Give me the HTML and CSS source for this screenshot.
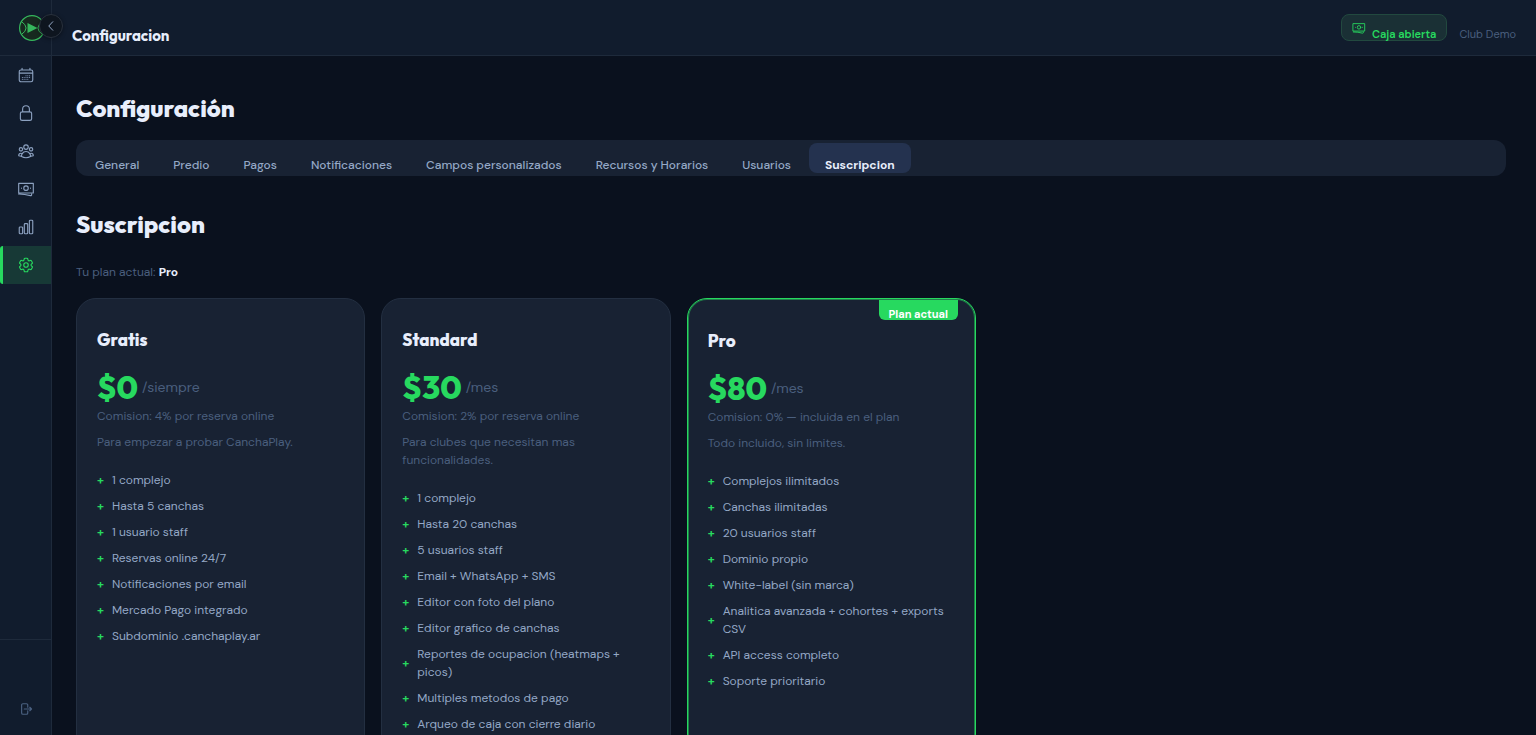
FILE: index.html
```html
<!DOCTYPE html>
<html lang="es">
<head>
<meta charset="utf-8">
<meta name="viewport" content="width=device-width, initial-scale=1">
<title>Configuracion</title>
<link rel="stylesheet" href="styles.css">
</head>
<body>
<svg class="sprite" aria-hidden="true">
  <symbol id="cash" viewBox="0 0 24 24"><path d="M2.250 18.750a60 60 0 0 1 15.800 2.100c.730.200 1.450-.340 1.450-1.100v-1M2.250 4.500h19.500v12.750H2.250zM15 10.900a3 3 0 1 1-6 0 3 3 0 0 1 6 0zM18 10.900h.010M6 10.900h.010"/></symbol>
</svg>
<div class="app">
  <aside class="sidebar">
    <div class="brand">
      <svg class="logo" viewBox="0 0 26 26" role="img" aria-label="CanchaPlay"><circle cx="13" cy="13" r="12.400" fill="#17291f" stroke="#36b85d" stroke-width="1.200"/><path d="M2.500 6.500Q12 13 2.500 19.500M23.500 6.500Q14 13 23.500 19.500" fill="none" stroke="#36b85d" stroke-width="1"/><path d="M8.500 8L18.500 13l-10 5z" fill="#36b85d" stroke="none"/></svg>
      <button class="collapse" aria-label="Contraer menu"><svg class="icon-xs" viewBox="0 0 24 24"><path d="M15.500 3.500L7.500 12l8 8.500"/></svg></button>
    </div>
    <nav class="nav" aria-label="Principal">
      <a href="#" aria-label="Reservas"><svg class="icon" viewBox="0 0 24 24"><path d="M6.750 3v2.250M17.250 3v2.250M3 18.750V7.500a2.250 2.250 0 0 1 2.250-2.250h13.500A2.250 2.250 0 0 1 21 7.500v11.250A2.250 2.250 0 0 1 18.750 21H5.250A2.250 2.250 0 0 1 3 18.750zM3 9.500h18M12 13h.01M12 15.300h.01M12 17.600h.01M9.500 15.300h.01M9.500 17.600h.01M7.200 15.300h.01M7.200 17.600h.01M14.400 13h.01M14.400 15.300h.01M14.400 17.600h.01M16.800 13h.01M16.800 15.300h.01"/></svg></a>
      <a href="#" aria-label="Bloqueos"><svg class="icon" viewBox="0 0 24 24"><path d="M16.500 10.500V6.750a4.500 4.500 0 1 0-9 0v3.750M6.750 21.750h10.500a2.250 2.250 0 0 0 2.250-2.250v-6.750a2.250 2.250 0 0 0-2.250-2.250H6.750a2.250 2.250 0 0 0-2.250 2.250v6.750a2.250 2.250 0 0 0 2.250 2.250z"/></svg></a>
      <a href="#" aria-label="Clientes"><svg class="icon" viewBox="0 0 24 24"><path d="M18 18.720a9.090 9.090 0 0 0 3.740-.480 3 3 0 0 0-4.680-2.720M18 18.720v.030c0 .220-.010.440-.040.660A11.940 11.940 0 0 1 12 21c-2.170 0-4.210-.580-5.960-1.580A6 6 0 0 1 6 18.720M18 18.720a5.970 5.970 0 0 0-.940-3.200 6 6 0 0 0-10.120 0A5.970 5.970 0 0 0 6 18.720a9.090 9.090 0 0 1-3.740-.480 3 3 0 0 1 4.680-2.720M15 6.750a3 3 0 1 1-6 0 3 3 0 0 1 6 0zM21 9.750a2.250 2.250 0 1 1-4.500 0 2.250 2.250 0 0 1 4.500 0zM7.500 9.750a2.250 2.250 0 1 1-4.500 0 2.250 2.250 0 0 1 4.500 0z"/></svg></a>
      <a href="#" aria-label="Caja"><svg class="icon"><use href="#cash"/></svg></a>
      <a href="#" aria-label="Reportes"><svg class="icon" viewBox="0 0 24 24"><path d="M3 13.125c0-.620.500-1.125 1.125-1.125h2.250c.620 0 1.125.500 1.125 1.125v6.750c0 .620-.500 1.125-1.125 1.125h-2.250A1.125 1.125 0 0 1 3 19.875zM9.750 8.625c0-.620.500-1.125 1.125-1.125h2.250c.620 0 1.125.500 1.125 1.125v11.250c0 .620-.500 1.125-1.125 1.125h-2.250a1.125 1.125 0 0 1-1.125-1.125zM16.500 4.125c0-.620.500-1.125 1.125-1.125h2.250C20.500 3 21 3.500 21 4.125v15.750c0 .620-.500 1.125-1.125 1.125h-2.250a1.125 1.125 0 0 1-1.125-1.125z"/></svg></a>
      <a href="#" class="active" aria-label="Configuracion" aria-current="page"><svg class="icon" viewBox="0 0 24 24"><path d="M9.594 3.940c.090-.542.560-.940 1.110-.940h2.593c.550 0 1.020.398 1.110.940l.213 1.281c.063.374.313.686.645.870.074.040.147.083.220.127.325.196.720.257 1.075.124l1.217-.456a1.125 1.125 0 0 1 1.370.490l1.296 2.247a1.125 1.125 0 0 1-.260 1.431l-1.003.827c-.293.241-.438.613-.430.992a7.723 7.723 0 0 1 0 .255c-.008.378.137.750.430.991l1.004.827c.424.350.534.955.260 1.430l-1.298 2.247a1.125 1.125 0 0 1-1.369.491l-1.217-.456c-.355-.133-.750-.072-1.076.124a6.470 6.470 0 0 1-.220.128c-.331.183-.581.495-.644.869l-.213 1.281c-.090.543-.560.940-1.110.940h-2.594c-.550 0-1.019-.398-1.110-.940l-.213-1.281c-.062-.374-.312-.686-.644-.870a6.520 6.520 0 0 1-.220-.127c-.325-.196-.720-.257-1.076-.124l-1.217.456a1.125 1.125 0 0 1-1.369-.490l-1.297-2.247a1.125 1.125 0 0 1 .260-1.431l1.004-.827c.292-.240.437-.613.430-.991a6.932 6.932 0 0 1 0-.255c.007-.380-.138-.751-.430-.992l-1.004-.827a1.125 1.125 0 0 1-.260-1.430l1.297-2.247a1.125 1.125 0 0 1 1.370-.491l1.216.456c.356.133.751.072 1.076-.124.072-.044.146-.086.220-.128.332-.183.582-.495.644-.869zM15 12a3 3 0 1 1-6 0 3 3 0 0 1 6 0z"/></svg></a>
    </nav>
    <div class="sidebar-foot">
      <button class="logout" aria-label="Cerrar sesion"><svg class="icon-sm" viewBox="0 0 24 24"><path d="M15 9V5.250A2.250 2.250 0 0 0 12.750 3h-6A2.250 2.250 0 0 0 4.500 5.250v13.500A2.250 2.250 0 0 0 6.750 21h6A2.250 2.250 0 0 0 15 18.750V15M18.500 9l3 3-3 3M21.500 12H9"/></svg></button>
    </div>
  </aside>
  <div class="workspace">
    <header class="topbar">
      <div class="page-name">Configuracion</div>
      <div class="status">
        <button class="cash-state"><svg class="icon-sm"><use href="#cash"/></svg><span>Caja abierta</span></button>
        <span class="club">Club Demo</span>
      </div>
    </header>
    <main class="content">
      <h1>Configuración</h1>
      <div class="tabs" role="tablist">
        <button role="tab">General</button>
        <button role="tab">Predio</button>
        <button role="tab">Pagos</button>
        <button role="tab">Notificaciones</button>
        <button role="tab">Campos personalizados</button>
        <button role="tab">Recursos y Horarios</button>
        <button role="tab">Usuarios</button>
        <button role="tab" aria-selected="true">Suscripcion</button>
      </div>
      <h2>Suscripcion</h2>
      <p class="current">Tu plan actual: <strong>Pro</strong></p>
      <div class="plans">
        <section class="plan">
          <h3>Gratis</h3>
          <div class="price"><strong>$0</strong><span>/siempre</span></div>
          <p class="fee">Comision: 4% por reserva online</p>
          <p class="about">Para empezar a probar CanchaPlay.</p>
          <ul>
            <li><span>1 complejo</span></li>
            <li><span>Hasta 5 canchas</span></li>
            <li><span>1 usuario staff</span></li>
            <li><span>Reservas online 24/7</span></li>
            <li><span>Notificaciones por email</span></li>
            <li><span>Mercado Pago integrado</span></li>
            <li><span>Subdominio .canchaplay.ar</span></li>
          </ul>
        </section>
        <section class="plan">
          <h3>Standard</h3>
          <div class="price"><strong>$30</strong><span>/mes</span></div>
          <p class="fee">Comision: 2% por reserva online</p>
          <p class="about">Para clubes que necesitan mas funcionalidades.</p>
          <ul>
            <li><span>1 complejo</span></li>
            <li><span>Hasta 20 canchas</span></li>
            <li><span>5 usuarios staff</span></li>
            <li><span>Email + WhatsApp + SMS</span></li>
            <li><span>Editor con foto del plano</span></li>
            <li><span>Editor grafico de canchas</span></li>
            <li><span>Reportes de ocupacion (heatmaps + picos)</span></li>
            <li><span>Multiples metodos de pago</span></li>
            <li><span>Arqueo de caja con cierre diario</span></li>
          </ul>
        </section>
        <section class="plan plan-current">
          <div class="badge">Plan actual</div>
          <h3>Pro</h3>
          <div class="price"><strong>$80</strong><span>/mes</span></div>
          <p class="fee">Comision: 0% — incluida en el plan</p>
          <p class="about">Todo incluido, sin limites.</p>
          <ul>
            <li><span>Complejos ilimitados</span></li>
            <li><span>Canchas ilimitadas</span></li>
            <li><span>20 usuarios staff</span></li>
            <li><span>Dominio propio</span></li>
            <li><span>White-label (sin marca)</span></li>
            <li><span>Analitica avanzada + cohortes + exports CSV</span></li>
            <li><span>API access completo</span></li>
            <li><span>Soporte prioritario</span></li>
          </ul>
        </section>
      </div>
    </main>
  </div>
</div>
</body>
</html>
```
FILE: styles.css
```css
:root {
  --bg: #0a111e;
  --panel: #111c2d;
  --card: #182233;
  --line: #1e2a3b;
  --text: #e8eefc;
  --soft: #94a8c6;
  --muted: #4a5f7e;
  --green: #27d95f;
  --display: "Outfit", "Lato", sans-serif;
}

* { box-sizing: border-box; }

body {
  margin: 0;
  background: var(--bg);
  color: var(--text);
  font: 12px/18px "DM Sans", "Inter", sans-serif;
}

h1, h2, h3, p, ul { margin: 0; padding: 0; }
button { border: 0; padding: 0; background: none; color: inherit; font: inherit; cursor: pointer; }

svg { display: block; flex: none; fill: none; stroke: currentColor; stroke-width: 1.5; stroke-linecap: round; stroke-linejoin: round; }
.sprite { position: absolute; width: 0; height: 0; }
.icon { width: 18px; height: 18px; }
.icon-sm { width: 14px; height: 14px; }
.icon-xs { width: 12px; height: 12px; stroke-width: 2; }

.app { display: flex; height: 100vh; }

.sidebar {
  display: flex;
  flex-direction: column;
  flex: none;
  width: 52px;
  background: var(--panel);
  border-right: 1px solid var(--line);
}
.brand {
  position: relative;
  display: flex;
  align-items: center;
  height: 56px;
  padding-left: 19px;
  border-bottom: 1px solid var(--line);
}
.logo { width: 26px; height: 26px; }
.collapse {
  position: absolute;
  top: 14px;
  right: -12px;
  display: grid;
  place-items: center;
  width: 24px;
  height: 24px;
  border: 1px solid #29313d;
  border-radius: 50%;
  background: #0e151f;
  color: var(--soft);
  box-shadow: 0 1px 4px rgba(0, 0, 0, .4);
}
.nav { flex: 1; }
.nav a {
  display: grid;
  place-items: center;
  height: 38px;
  border-left: 3px solid transparent;
  padding-right: 3px;
  color: #8ca1c0;
}
.nav .active { background: #173936; border-color: var(--green); border-radius: 3px 0 0 3px; color: var(--green); }
.sidebar-foot {
  display: flex;
  justify-content: center;
  align-items: flex-end;
  height: 96px;
  padding-bottom: 19px;
  border-top: 1px solid var(--line);
}
.logout { color: #4a6080; }
.logout svg { stroke-width: 2; }

.workspace { display: flex; flex-direction: column; flex: 1; min-width: 0; }
.topbar {
  display: flex;
  justify-content: space-between;
  align-items: center;
  flex: none;
  height: 56px;
  padding: 0 20px;
  background: var(--panel);
  border-bottom: 1px solid var(--line);
}
.page-name { padding-top: 16px; font: 700 15px/20px var(--display); }
.status { display: flex; align-items: center; gap: 12px; font-size: 11px; }
.cash-state {
  display: flex;
  gap: 6px;
  height: 27px;
  padding: 6px 10px;
  border: 1px solid #22493f;
  border-radius: 8px;
  background: #1a3035;
  color: var(--green);
  font-weight: 600;
}
.cash-state span { padding-top: 4px; }
.club { padding-top: 13px; color: var(--muted); }

.content { flex: 1; min-height: 0; padding: 24px 30px 24px 24px; overflow-y: auto; scrollbar-width: none; }
h1, h2 { font: 800 24px/56px var(--display); }
h1 { margin-bottom: 4px; }
h2 { margin-top: 20px; }

.tabs { display: flex; gap: 2px; padding: 3px; border-radius: 12px; background: var(--card); }
.tabs button {
  height: 30px;
  padding: 14px 16px 0;
  border-radius: 8px;
  color: var(--soft);
  font-weight: 500;
  line-height: 16px;
  white-space: nowrap;
}
.tabs [aria-selected="true"] { background: #24324f; color: var(--text); font-weight: 700; }

.current { margin: 10px 0 16px; color: var(--muted); line-height: 20px; }
.current strong { color: var(--text); font-weight: 700; }

.plans { display: grid; grid-template-columns: repeat(3, 1fr); gap: 16px; max-width: 900px; }
.plan {
  position: relative;
  padding: 20px;
  border: 1px solid #232f41;
  border-radius: 20px;
  background: var(--card);
  overflow: hidden;
}
.plan-current { padding: 21px 20px; border-color: var(--green); box-shadow: inset 0 0 0 1px #1f7f49; }
.plan h3 { margin-bottom: 6px; font: 800 17px/42px var(--display); }
.price { display: flex; align-items: center; gap: 4px; height: 40px; }
.price strong { color: var(--green); font: 800 32px/40px var(--display); }
.price span { color: var(--muted); font-size: 14px; }
.fee, .about { color: var(--muted); }
.about { margin: 8px 0 20px; }
.plan ul { display: grid; gap: 8px; list-style: none; color: var(--soft); }
.plan li { display: flex; align-items: center; gap: 8px; }
.plan li::before { content: "+"; flex: none; width: 7px; color: var(--green); font-weight: 700; }
.badge {
  position: absolute;
  top: 1px;
  right: 17px;
  padding: 8px 10px 0;
  border-radius: 0 0 6px 6px;
  background: var(--green);
  color: #fff;
  font-size: 11px;
  font-weight: 700;
  line-height: 12px;
}
```
